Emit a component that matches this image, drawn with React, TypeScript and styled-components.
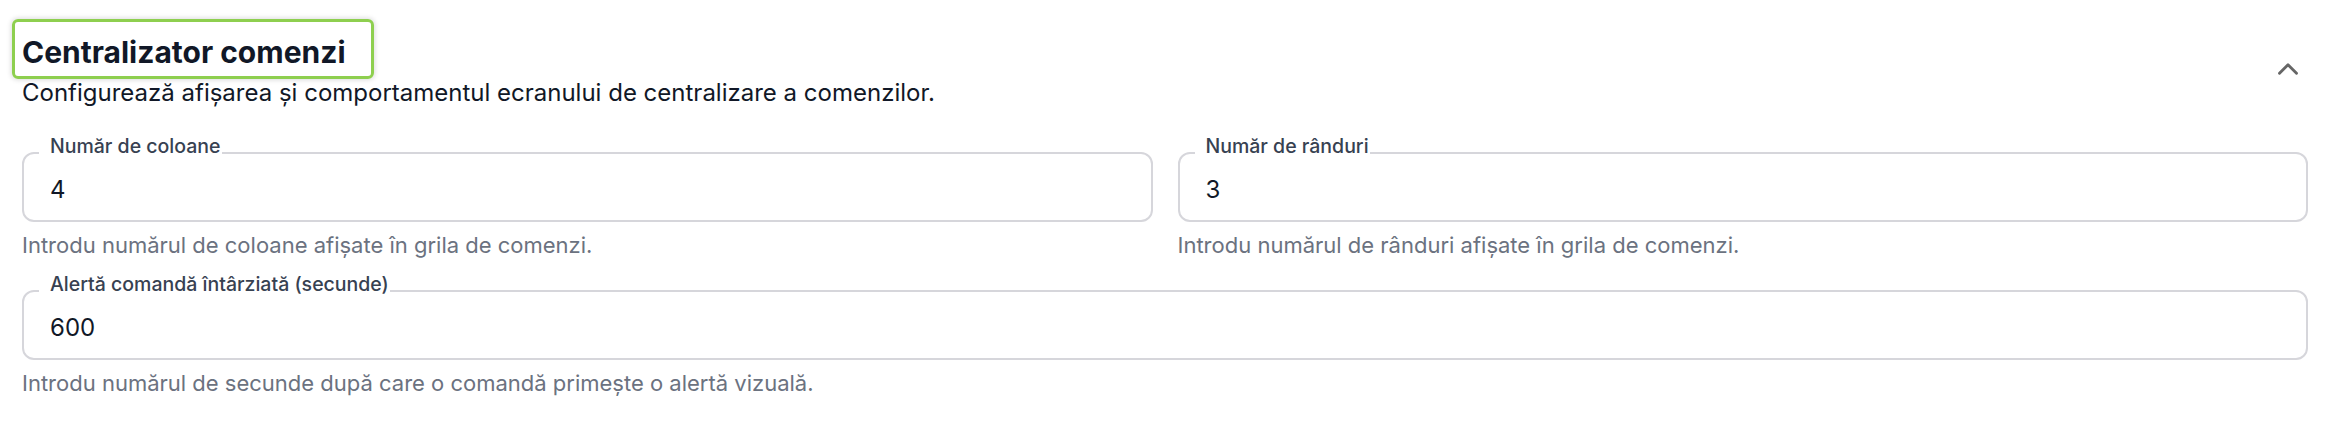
import React from 'react';
import styled, { createGlobalStyle } from 'styled-components';
import { ChevronUp } from 'lucide-react';

const GlobalStyle = createGlobalStyle`
  html, body {
    margin: 0;
    padding: 0;
    background: #ffffff;
  }

  body {
    font-family: Inter, 'Noto Sans', 'Liberation Sans', sans-serif;
    color: #111827;
    -webkit-font-smoothing: antialiased;
  }
`;

const Page = styled.div`
  padding: 19px 25px 0 22px;
`;

const Header = styled.header`
  display: flex;
  justify-content: space-between;
  align-items: flex-start;
`;

const HeaderText = styled.div`
  display: flex;
  flex-direction: column;
  align-items: flex-start;
`;

// green review marker drawn round the section title
const TitleHighlight = styled.div`
  margin: 0 0 -4px -10px;
  padding: 9px 25px 3px 7px;
  border: 3px solid #8ecf4f;
  border-radius: 6px;
  box-shadow: 0 0 5px 1px rgba(0, 0, 0, 0.14);
`;

const Title = styled.h2`
  margin: 0;
  font-size: 30px;
  line-height: 42px;
  font-weight: 700;
  color: #111827;
`;

const Description = styled.p`
  margin: 0;
  font-size: 24px;
  line-height: 36px;
  color: #111827;
`;

const CollapseButton = styled.button`
  display: flex;
  align-items: center;
  justify-content: center;
  width: 34px;
  height: 34px;
  margin: 33px 3px 0 0;
  padding: 0;
  border: 0;
  background: transparent;
  color: #666666;
  cursor: pointer;
`;

const Fields = styled.div`
  display: grid;
  grid-template-columns: 1fr 1fr;
  column-gap: 25px;
  margin-top: 13px;
`;

const Field = styled.div<{ $wide?: boolean }>`
  display: flex;
  flex-direction: column;
  padding-top: 28px;
  grid-column: ${(p) => (p.$wide ? '1 / -1' : 'auto')};
`;

const InputBox = styled.div`
  position: relative;
  height: 70px;
  box-sizing: border-box;
  border: 2px solid #d6d6db;
  border-radius: 12px;
  background: #ffffff;
`;

const Legend = styled.label`
  position: absolute;
  top: -18px;
  left: 15px;
  padding: 0 1px 0 11px;
  background: #ffffff;
  font-size: 19.5px;
  line-height: 20px;
  font-weight: 500;
  color: #374151;
  white-space: nowrap;
`;

const Input = styled.input`
  display: block;
  width: 100%;
  box-sizing: border-box;
  height: 66px;
  padding: 17px 26px 13px;
  border: 0;
  border-radius: 10px;
  background: transparent;
  font-family: inherit;
  font-size: 24px;
  line-height: 36px;
  color: #111827;
  outline: none;
`;

const Helper = styled.p`
  margin: 7px 0 0;
  font-size: 22px;
  line-height: 33px;
  color: #6b7280;
`;

type FieldConfig = {
  id: string;
  label: string;
  value: string;
  helper: string;
  wide?: boolean;
};

const fields: FieldConfig[] = [
  {
    id: 'columns',
    label: 'Număr de coloane',
    value: '4',
    helper: 'Introdu numărul de coloane afișate în grila de comenzi.',
  },
  {
    id: 'rows',
    label: 'Număr de rânduri',
    value: '3',
    helper: 'Introdu numărul de rânduri afișate în grila de comenzi.',
  },
  {
    id: 'late-alert',
    label: 'Alertă comandă întârziată (secunde)',
    value: '600',
    helper: 'Introdu numărul de secunde după care o comandă primește o alertă vizuală.',
    wide: true,
  },
];

export default function App() {
  return (
    <>
      <GlobalStyle />
      <Page>
        <Header>
          <HeaderText>
            <TitleHighlight>
              <Title>Centralizator comenzi</Title>
            </TitleHighlight>
            <Description>
              Configurează afișarea și comportamentul ecranului de centralizare a comenzilor.
            </Description>
          </HeaderText>
          <CollapseButton aria-label="Restrânge">
            <ChevronUp size={34} strokeWidth={2} />
          </CollapseButton>
        </Header>

        <Fields>
          {fields.map((f) => (
            <Field key={f.id} $wide={f.wide}>
              <InputBox>
                <Legend htmlFor={f.id}>{f.label}</Legend>
                <Input id={f.id} type="number" defaultValue={f.value} />
              </InputBox>
              <Helper>{f.helper}</Helper>
            </Field>
          ))}
        </Fields>
      </Page>
    </>
  );
}
